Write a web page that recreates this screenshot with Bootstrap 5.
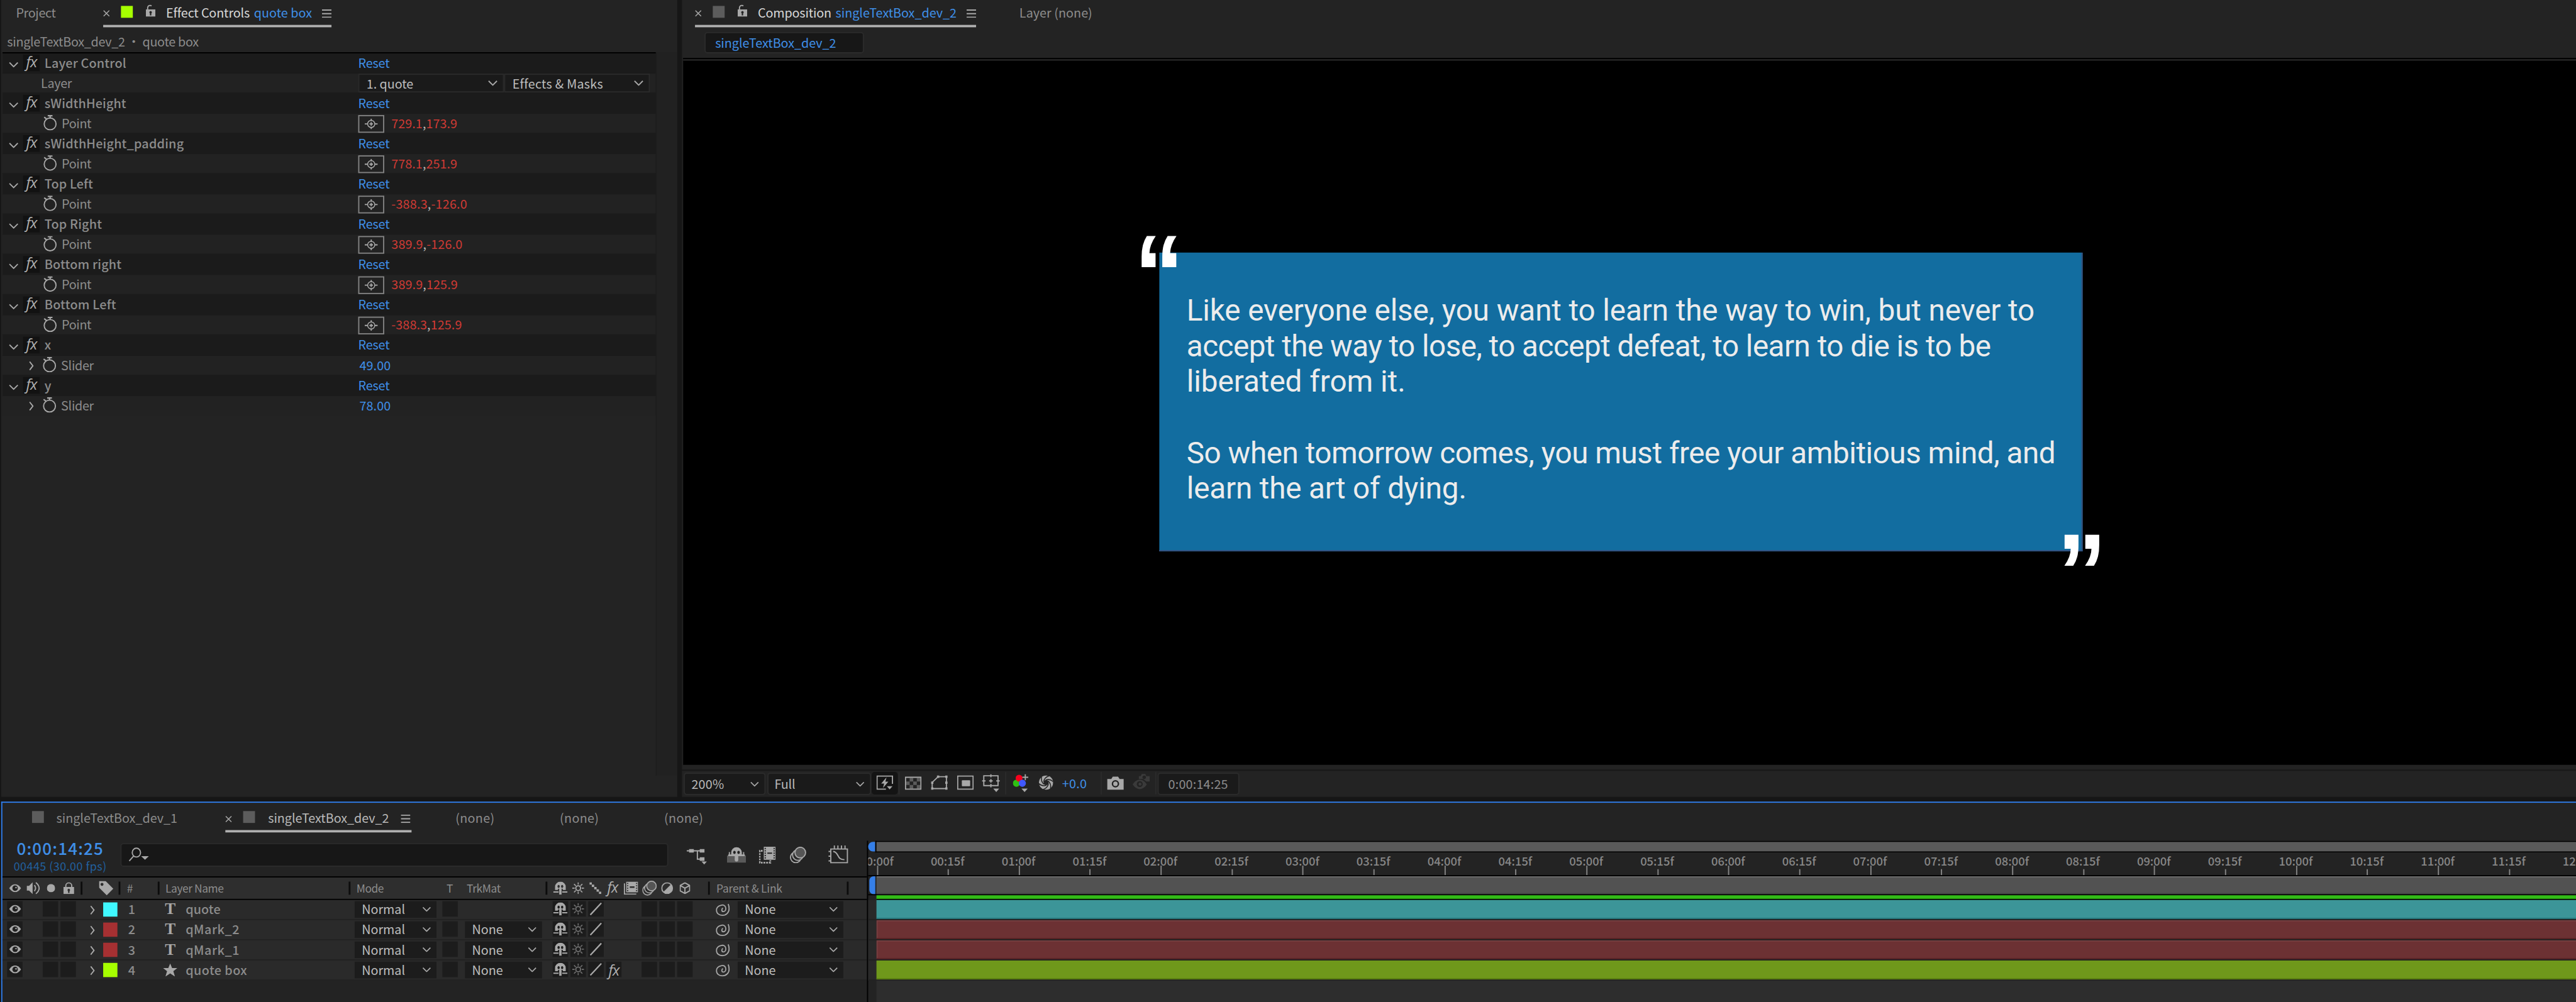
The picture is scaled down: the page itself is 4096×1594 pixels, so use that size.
<!DOCTYPE html>
<html lang="en">
<head>
<meta charset="utf-8">
<title>Composition editor</title>
<link rel="stylesheet" href="https://cdn.jsdelivr.net/npm/bootstrap@5.3.0/dist/css/bootstrap.min.css">
<style>
html,body{width:4096px;height:1594px;overflow:hidden;background:#161616}
body{font-family:"Noto Sans CJK SC","Noto Sans",sans-serif;font-size:21px;color:#8c8c8c;line-height:1}
.screen{width:4096px;height:1594px;overflow:hidden;contain:strict}
.app{width:4344px;height:1690px;overflow:hidden;transform:scale(.94291,.9432);transform-origin:0 0;background:#161616}
.app span,.app svg,.app i{flex:none;white-space:nowrap}
svg{display:block;fill:none;stroke:#a8a8a8;stroke-width:2}
.solid{fill:#a8a8a8;stroke:none}
.blue{color:#3f8fe8}.red{color:#cf3a34}.lit{color:#d8d8d8}.soft{color:#b9b9b9}
.top{height:1344px}
.pane{background:#232323}
.effects{width:1140px;margin-left:2px}
.viewer{margin-left:8px;width:3194px}
/* tabs */
.tabs{height:46px;line-height:42px}
.tab-on{height:46px;border-bottom:4px solid #b0b0b0}
.sq{width:20px;height:20px;background:#5c5c5c;margin-top:10px}
.lime{background:#a6ff00}
.fxi{font-family:"Open Sans","Noto Sans",sans-serif;font-style:italic;font-size:25px;letter-spacing:-1px;color:#b0b0b0}
.tab-off{margin-left:25px;width:67px}
.tab-fx{width:385px;margin-left:80px}
.tab-comp{width:474px;margin-left:22px}
.tab-on>svg:first-child{margin-top:17px}
.tab-on>.sq{margin-left:19px}
.tab-on>.sq+svg{margin:8px 18px 0 22px}
.tab-on>.blue{margin-left:7px}
.tab-on>svg:last-child{margin:16px 0 0 auto}
.tab-layer{margin-left:73px}
/* effect tree */
.crumb{height:42px;line-height:47px;padding-left:10px}
.tree{margin-left:2px;width:1102px}
.effhead{height:36px;line-height:34px;background:#1b1b1b;padding-left:11px}
.effhead:first-child{box-shadow:inset 0 2px #000}
.effhead>svg{margin-top:16px}
.effbody{height:32px;line-height:30px;background:#222}
.tile{width:28px;height:28px;background:#121212;margin-left:8px;line-height:24px;text-align:center}
.tile .fxi{line-height:22px;display:block}
.nm{width:529px;margin-left:8px;font-weight:500}
.lead-in{width:600px}
.lbl-layer{margin-left:65px}
.turn{margin:9px 15px 0 45px}
.watch{margin:2px 8px 0 0}
.watch.alone{margin-left:69px}
.target{width:44px;height:30px;border:2px solid #828282;margin:2px 12px 0 0}
.pick{height:32px;line-height:28px;background:#1a1a1a;border:2px solid #2b2b2b;color:#bdbdbd}
.pick-a{width:246px;padding:0 9px 0 12px}
.strip{width:36px;height:1220px;background:#212121;border-left:1px solid #1c1c1c}
/* viewer */
.flow-btn{width:269px;height:36px;margin:8px 0 8px 38px;background:#171717;border:2px solid #2b2b2b;border-radius:5px;padding-left:16px;line-height:32px}
.stage{margin-left:2px;height:1192px;background:#000;border-top:2px solid #000;box-shadow:inset 0 2px #333;padding:326px 0 0 803px}
.quote-box{width:1557px;height:504px;background:#126da0;padding:68px 0 0 46px;box-shadow:inset -2px -2px #38507f}
.quote-box p{font-family:Roboto,"Noto Sans",sans-serif;font-size:50.5px;line-height:60px;color:#ececec;margin:0 0 60px}
.qm{position:absolute;font-family:"Liberation Sans",sans-serif;font-weight:700;font-size:185px;line-height:185px;color:#fff;transform:scaleX(.9);transform-origin:0 0}
.qm-a{left:-42px;top:-56px}.qm-b{left:1514px;top:447px}
.bar{height:46px;margin-top:8px;border-top:2px solid #181818}
.sel{height:38px;margin-top:3px;background:#1a1a1a;border:2px solid #2b2b2b;border-radius:5px;line-height:33px;color:#b9b9b9}
.sep{width:2px;height:38px;background:#2b2b2b;margin-top:2px}
.s138{width:138px;padding:0 9px 0 11px}.s175{width:175px;padding:0 9px 0 10px}
.fast{width:44px;height:38px;background:#141414;border-radius:5px;margin-top:2px;padding-left:8px}
.fast svg{margin-top:-2px}
.expo{line-height:40px}
.timebox{padding-left:16px;color:#8c8c8c;line-height:34px}
.x1{margin-left:1px}.x2{margin-left:2px}.x3{margin-left:3px}.x9{margin-left:9px}.x11{margin-left:11px}.x14{margin-left:14px}.x15{margin-left:15px}.x16{margin-left:16px}.x18{margin-left:18px}.x23{margin-left:23px}
/* timeline */
.timeline{margin:8px 0 0 2px;width:4342px;height:338px;border:2px solid #2f7be8;border-right:0;border-bottom:0;background:#232323;overflow:hidden}
.tltop{height:124px;width:1458px}
.tltabs{height:50px;line-height:50px}
.tltabs .sq{margin-top:14px}
.tltabs .tab-on{height:50px}
.sq1{margin-left:50px}
.tn1{margin-left:21px}
.tab-tl{width:314px;margin-left:81px}
.tab-tl>span{margin-left:22px}
.tltabs .tab-tl>svg:first-child{margin-top:22px}
.tltabs .tab-tl>svg:last-child{margin-top:20px;margin-right:2px}
.n1{margin-left:74px}.n2{margin-left:110px}
.tools{margin-top:18px}
.clock{width:199px;margin-top:-6px}
.tc{font-size:27.5px;font-weight:500;color:#3f8fe8;line-height:28px;height:30px;padding-left:24px}
.fps{font-size:19px;color:#22609f;line-height:20px;padding:4px 0 0 19px}
.search{width:924px;height:40px;background:#171717;border:2px solid #2a2a2a;border-radius:5px;padding-left:12px}
.tool-a{margin-left:31px}.tool-b{margin-left:34px}.tool-c{margin-left:22px}.tool-d{margin-left:24px;margin-top:6px}.tool-e{margin-left:37px}
.tlhead{display:grid;grid-template-columns:135px 64px 66px 322px 332px 274px 234px 31px;width:1458px;height:40px;background:#2e2e2e;border-top:2px solid #000;border-bottom:2px solid #000;font-size:18.5px;line-height:22px;align-items:center}
.tlhead>div{height:22px;border-right:3px solid #0c0c0c;display:flex;align-items:center}
.tlhead>div:last-child{border:0}
.tlhead span{margin-top:-3px}
.h1c{padding-left:11px}.h1c svg+svg{margin-left:9px}.h1c svg:nth-child(3){margin-left:10px}.h1c svg:nth-child(4){margin-left:14px}
.h2c{padding-left:28px}.h3c{padding-left:11px}.h4c{padding-left:10px}.h5c{padding-left:10px}.h5c span:nth-child(2){margin-left:106px;width:9px}.h5c span:nth-child(3){margin-left:25px}
.h6c{padding-left:10px}.h6c>*{flex:none}
.h6c>:nth-child(2){margin-left:8px}.h6c>:nth-child(3){margin-left:9px}.h6c .fxi{margin:-4px 0 0 10px;width:22px}.h6c>:nth-child(5){margin-left:6px}.h6c>:nth-child(6){margin-left:7px}.h6c>:nth-child(7){margin-left:7px}.h6c>:nth-child(8){margin-left:11px}
.h7c{padding-left:11px}
.lrow{display:grid;grid-template-columns:8px 30px 30px 30px 30px 42px 39px 62px 38px 285px 148px 38px 148px repeat(8,30px) 35px 37px 218px;width:1458px;height:34px;background:#2a2a2a;border-bottom:2px solid #222;line-height:30px}
.lrow>div{display:flex;align-items:flex-start}
.lrow b{font-weight:500}
.cell{background:#1c1c1c;width:26px;height:26px;margin-top:2px;display:flex;align-items:center;justify-content:center}
.cell .fxi{line-height:22px}
.twirl{margin:9px 0 0 20px}
.rnum{padding-left:3px}
.swatch{width:24px;height:24px;margin-top:4px}
.starry{margin-top:5px}
.spiral{margin-top:5px}
.kind{font-family:"Liberation Serif",serif;font-weight:700;font-size:27px;color:#a8a8a8;margin-left:3px;line-height:30px}
.dd{display:flex;justify-content:space-between;align-items:flex-start;background:#1c1c1c;color:#bdbdbd;height:28px;line-height:26px;margin-top:2px;padding:0 9px 0 12px}
.dd svg{margin-top:9px}
.d138{width:138px}.d130{width:130px}.d178{width:178px}
.dim svg{opacity:.6}
.c-cyan{background:#40f8ff}.c-red{background:#a63032}.c-lime{background:#a6ff00}
.lanes{width:2882px;border-left:2px solid #000;margin-top:64px}
.nav-track{height:20px;background:#5a5a5a;border:2px solid #000;border-right:0;width:2868px}
.grab{width:12px;height:16px;background:#357fe8;border-radius:9px 0 0 9px;margin-top:2px}
.ruler{height:38px;font-size:19.5px;line-height:27px;overflow:hidden;font-weight:500;color:#868686}
.tick{width:119.66px;text-align:center;position:relative}
.tick::after{content:"";position:absolute;left:60px;bottom:0;width:2px;height:10px;background:#868686}
.tick:nth-child(odd)::after{height:16px}
.ruler .d-flex{margin-left:-45.5px;height:38px}
.work{height:34px;border-top:2px solid #000;border-bottom:2px solid #000}
.wbar{margin-left:2px;width:2866px;background:#525252;box-shadow:inset 0 2px #696969,inset 0 -2px #484848}
.work .grab{margin:0 0 0 2px;width:10px;height:30px;border-radius:7px 0 0 7px}
.cache{height:8px;margin-left:14px;background:#33bb18;border-bottom:2px solid #000}
.lane{height:34px;border-bottom:2px solid #222;background:#292929;padding-left:14px}
.lane>div{height:32px}
.l-cyan{background:#3c9598;box-shadow:inset 0 -2px #28777b}
.l-red{background:#6c3133;box-shadow:inset 0 -2px #552224,inset 2px 2px #774042}
.l-lime{background:#6f981b;box-shadow:inset 0 -2px #587b10}
.void{height:36px;margin-left:14px;background:#2d2d2d}
</style>
<script src="https://cdn.jsdelivr.net/npm/bootstrap@5.3.0/dist/js/bootstrap.bundle.min.js"></script>
</head>
<body>
<svg width="0" height="0" class="position-absolute">
<symbol id="down" viewBox="0 0 16 10"><path d="M1 1.500l7 7 7-7"/></symbol>
<symbol id="next" viewBox="0 0 8 16"><path d="M1 1l5.500 7-5.500 7"/></symbol>
<symbol id="burger" viewBox="0 0 16 14"><path d="M0 1h16M0 7h16M0 13h16"/></symbol>
<symbol id="close" viewBox="0 0 11 11"><path d="M.7.7l9.600 9.600M10.300.7l-9.600 9.600" stroke-width="1.600"/></symbol>
<symbol id="unlock" viewBox="0 0 16 20"><path d="M3 9V5a4 4 0 0 1 6.500-3"/><path class="solid" fill-rule="evenodd" d="M0 8h16v12H0zM8 10.500a2.200 2.200 0 0 0-1.200 4V18h2.400v-3.500a2.200 2.200 0 0 0-1.200-4z"/></symbol>
<symbol id="lock" viewBox="0 0 18 20"><path d="M4 9V6a5 5 0 0 1 10 0v3"/><path class="solid" fill-rule="evenodd" d="M0 8h18v12H0zM9 11a2.200 2.200 0 0 0-1.200 4v3h2.400v-3A2.200 2.200 0 0 0 9 11z"/></symbol>
<symbol id="watch" viewBox="0 0 23 26"><circle cx="11.500" cy="15" r="10"/><path d="M7.500 1.200h8M11.500 1v4M1.500 3.500l4 3" stroke-width="2.300"/></symbol>
<symbol id="aim" viewBox="0 0 22 18"><circle cx="11" cy="9" r="6" stroke-width="1.600"/><path d="M0 9h5M17 9h5M11 0v4M11 14v4M8 9h6M11 6v6"/></symbol>
<symbol id="eye" viewBox="0 0 20 14"><path class="solid" d="M0 7Q10-6.500 20 7 10 20.500 0 7z"/><circle cx="10" cy="7" r="4.600" fill="#222" stroke="none"/><circle cx="11.500" cy="6" r="1.300" class="solid"/></symbol>
<symbol id="ghost" viewBox="0 0 24 22"><path class="solid" fill-rule="evenodd" d="M3 14V8.500a9 8.500 0 0 1 18 0V14h-4.500l-1-2h-7l-1 2zM9 5.500a1.900 2.500 0 1 0 .01 0zM15 5.500a1.900 2.500 0 1 0 .01 0z"/><path class="solid" d="M10 11h4v11h-4z"/><path d="M0 17.500h9M15 17.500h9"/></symbol>
<symbol id="sun" viewBox="0 0 20 20"><circle cx="10" cy="10" r="4"/><path d="M10 0v4M10 16v4M0 10h4M16 10h4M3 3l3 3M14 14l3 3M17 3l-3 3M6 14l-3 3" stroke-width="1.700"/></symbol>
<symbol id="slash" viewBox="0 0 22 22"><path d="M1.500 21L20 1" stroke-width="2.400"/></symbol>
<symbol id="stair" viewBox="0 0 20 20"><path class="solid" d="M0 0h4v4H0zM4 4h4v4H4zM8 8h4v4H8zM12 12h4v4h-4zM16 16h4v4h-4z"/></symbol>
<symbol id="film" viewBox="0 0 24 22"><path d="M1 3v18h20"/><path class="solid" fill-rule="evenodd" d="M4 0h20v18H4zM5.500 2v2h2V2zM5.500 6v2h2V6zM5.500 10v2h2v-2zM5.500 14v2h2v-2zM20.500 2v2h2V2zM20.500 6v2h2V6zM20.500 10v2h2v-2zM20.500 14v2h2v-2zM10 8v2.500h8V8z"/></symbol>
<symbol id="blurs" viewBox="0 0 28 28"><circle cx="10" cy="18" r="9"/><circle cx="13.500" cy="14" r="9" fill="#2a2a2a"/><circle cx="17.500" cy="10" r="9" fill="#555"/></symbol>
<symbol id="half" viewBox="0 0 20 20"><circle cx="10" cy="10" r="9"/><path class="solid" d="M16.400 3.600A9 9 0 0 1 3.600 16.400z"/></symbol>
<symbol id="cube" viewBox="0 0 18 20"><path d="M9 1l8 4.500v9L9 19l-8-4.500v-9zM1 5.500l8 4.500 8-4.500M9 10v9"/></symbol>
<symbol id="whirl" viewBox="0 0 24 22"><path d="M12 8.500c-2.500 2-2.500 6 1 6 3.200 0 4.500-3.500 3.800-6.500C16 4 12.500 2.500 9 3.800 4.500 5 1.200 8 1.200 12 1.200 17.500 5.500 20.800 11 20.800c7 0 11.500-5 11.500-11 0-3-.5-5.500-1.500-8" stroke-width="1.900"/></symbol>
<symbol id="star" viewBox="0 0 24 22"><path class="solid" d="M12 0l3.200 7.800H24l-6.700 5.300L20 22l-8-5.300L4 22l2.700-8.900L0 7.800h8.800z"/></symbol>
</svg>

<div class="screen">
<div class="app">
  <div class="top d-flex">
    <section class="effects pane">
      <div class="tabs d-flex">
        <span data-w="67" class="tab-off">Project</span>
        <div class="tab-on tab-fx d-flex">
          <svg width="11" height="11"><use href="#close"/></svg>
          <div class="sq lime"></div>
          <svg width="16" height="20"><use href="#unlock"/></svg>
          <span class="lit" data-w="141">Effect Controls</span><span class="blue" data-w="98">quote box</span>
          <svg width="16" height="14"><use href="#burger"/></svg>
        </div>
      </div>
      <div class="crumb"><span data-w="323">singleTextBox_dev_2 • quote box</span></div>
      <div class="d-flex">
        <div class="tree" id="tree"></div>
        <div class="strip"></div>
      </div>
    </section>

    <section class="viewer pane">
      <div class="tabs d-flex">
        <div class="tab-on tab-comp d-flex">
          <svg width="11" height="11"><use href="#close"/></svg>
          <div class="sq"></div>
          <svg width="16" height="20"><use href="#unlock"/></svg>
          <span class="lit" data-w="124">Composition</span><span class="blue" data-w="204">singleTextBox_dev_2</span>
          <svg width="16" height="14"><use href="#burger"/></svg>
        </div>
        <span class="tab-layer" data-w="123">Layer (none)</span>
      </div>
      <div class="flow-btn blue"><span data-w="204">singleTextBox_dev_2</span></div>
      <div class="stage">
        <div class="quote-box position-relative">
          <p><span data-w="1430">Like everyone else, you want to learn the way to win, but never to</span><br><span data-w="1356">accept the way to lose, to accept defeat, to learn to die is to be</span><br><span data-w="369">liberated from it.</span></p>
          <p><span data-w="1465">So when tomorrow comes, you must free your ambitious mind, and</span><br><span data-w="472">learn the art of dying.</span></p>
          <div class="qm qm-a">“</div><div class="qm qm-b">”</div>
        </div>
      </div>
      <div class="bar d-flex">
        <div class="sel s138 x3 d-flex justify-content-between align-items-center"><span data-w="55">200%</span><svg width="15" height="9"><use href="#down"/></svg></div>
        <div class="sel s175 x3 d-flex justify-content-between align-items-center"><span data-w="35">Full</span><svg width="15" height="9"><use href="#down"/></svg></div>
        <div class="fast x1"><svg width="28" height="44"><path d="M16 31H1V9h26v13"/><path class="solid" d="M17 11L8 21.500h5L11 29l9-10.500h-5zM17.500 26H27l-4.700 5.500z"/></svg></div>
        <div class="sep x1"></div>
        <svg class="x9" width="28" height="44"><path stroke="none" fill="#5c5c5c" d="M8 12h6v6H8zM20 12h6v6h-6zM2 18h6v6H2zM14 18h6v6h-6zM8 24h6v6H8zM20 24h6v6h-6z"/><path d="M1 11h26v20H1z"/></svg>
        <svg class="x16" width="28" height="44"><path d="M2 30V19.500L12 10h14v20z"/><path class="solid" d="M0 28h4v4H0zM24 28h4v4h-4zM24 8h4v4h-4zM10 8h4v4h-4zM0 18h4v4H0zM24 18h4v4h-4z"/></svg>
        <svg class="x16" width="28" height="44"><path d="M1 9h26v22H1z"/><rect class="solid" x="8" y="16" width="14" height="10" rx="1"/></svg>
        <svg class="x14" width="30" height="44"><path d="M3 8.500h24V25H3zM15 6v5M15 22v6M0 17h6M24 17h6M12 17h6M15 14v6"/><path class="solid" d="M19 30h10l-5 6z"/></svg>
        <div class="sep x9"></div>
        <svg class="x11" width="26" height="44"><g stroke="none"><circle cx="6" cy="21" r="6" fill="#2fbf12"/><circle cx="10.500" cy="12.500" r="5.800" fill="#f5001c"/><circle cx="16" cy="21" r="6" fill="#4058ff"/></g><path d="M21 6v10M16 11h10"/><path class="solid" d="M14.500 30h10.500l-5.200 6z"/></svg>
        <svg class="x18" width="24" height="44"><circle class="solid" cx="12" cy="20" r="12"/><circle cx="12" cy="20" r="4.200" fill="#232323" stroke="none"/><g stroke="#232323" stroke-width="1.600"><path id="bl" d="M8 18.500Q9 11 17 8.500"/><use href="#bl" transform="rotate(60 12 20)"/><use href="#bl" transform="rotate(120 12 20)"/><use href="#bl" transform="rotate(180 12 20)"/><use href="#bl" transform="rotate(240 12 20)"/><use href="#bl" transform="rotate(300 12 20)"/></g></svg>
        <span class="blue expo x15" data-w="42">+0.0</span>
        <div class="sep x23"></div>
        <svg class="x9" width="28" height="44"><path class="solid" d="M0 14h7l2.500-4h9l2.500 4h7v18H0z"/><circle cx="14" cy="22" r="5" stroke="#232323" fill="#a8a8a8" stroke-width="2.500"/></svg>
        <svg class="x15" width="29" height="44"><g fill="#3a3a3a" stroke="none" fill-rule="evenodd"><path d="M0 23q5-8 12-8t12 8q-5 8-12 8T0 23zM12 17.500a5 5 0 1 0 .01 0zM10.500 9h3l2-3.500h6L23 9h6v9h-6l-5-4h-7.500zM19.500 8a3 3 0 1 0 .01 0z"/><circle cx="12.500" cy="22.500" r="2.500"/></g></svg>
        <div class="sep x9"></div>
        <div class="sel s138 x2 timebox"><span data-w="101">0:00:14:25</span></div>
      </div>
    </section>
  </div>

  <section class="timeline d-flex">
    <div>
      <div class="tltop">
        <div class="tltabs d-flex">
          <div class="sq sq1"></div><span class="tn1" data-w="204">singleTextBox_dev_1</span>
          <div class="tab-on tab-tl d-flex">
            <svg width="11" height="11"><use href="#close"/></svg>
            <div class="sq"></div><span class="soft" data-w="204">singleTextBox_dev_2</span>
            <svg width="16" height="14"><use href="#burger"/></svg>
          </div>
          <span class="n1" data-w="66">(none)</span><span class="n2" data-w="66">(none)</span><span class="n2" data-w="66">(none)</span>
        </div>
        <div class="d-flex tools">
          <div class="clock"><div class="tc"><span data-w="147">0:00:14:25</span></div><div class="fps"><span data-w="157">00445 (30.00 fps)</span></div></div>
          <div class="search"><svg width="34" height="36"><ellipse cx="13" cy="14" rx="7" ry="7.500"/><path d="M8.500 19.500L1 28"/><path class="solid" d="M21 20h13l-6.500 6z"/></svg></div>
          <svg class="tool-a" width="34" height="40"><path d="M0 13h26M18 13v14h8"/><path class="solid" d="M4 10h8v6H4zM22 10h8v6h-8zM22 24h8v6h-8zM25 31h9l-4.500 5z"/></svg>
          <svg class="tool-b" width="32" height="40"><path stroke="none" fill="#5a5a5a" d="M0 21h32v12H0z"/><path class="solid" fill-rule="evenodd" d="M7 19v-3a9 9 0 0 1 18 0v3h2v-4h2v4h1v3H19v6a3 3 0 0 1-6 0v-6H2v-3h1v-4h2v4zM12.500 13a2.200 2.700 0 1 0 .01 0zM19.500 13a2.200 2.700 0 1 0 .01 0z"/></svg>
          <svg class="tool-c" width="28" height="40"><path d="M6 13H1v20h18v-4" stroke-width="3" stroke-dasharray="3 1.500"/><path class="solid" fill-rule="evenodd" d="M8 6h20v22H8zM9.500 8v2h2V8zM9.500 12v2h2v-2zM9.500 16v2h2v-2zM9.500 20v2h2v-2zM9.500 24v2h2v-2zM24.500 8v2h2V8zM24.500 12v2h2v-2zM24.500 16v2h2v-2zM24.500 20v2h2v-2zM24.500 24v2h2v-2zM14 16v2h8v-2z"/></svg>
          <svg class="tool-d" width="28" height="28"><use href="#blurs"/></svg>
          <svg class="tool-e" width="34" height="40"><path d="M4 10h28v23H4zM10 4v6M16 4v6M22 4v6M28 4v6M0 14h4M0 22h4M0 30h4"/><path d="M8 14c4 0 6 3 8 7s4 7 11 7"/></svg>
        </div>
      </div>
      <div class="tlhead">
        <div class="h1c"><svg width="21" height="14"><use href="#eye"/></svg><svg width="24" height="22"><path class="solid" d="M0 7h4l6-6v20l-6-6H0z"/><path d="M13 6q4 5 0 10M15.500 1.500q11 9.500 0 19"/></svg><svg width="14" height="14"><circle class="solid" cx="7" cy="7" r="7"/></svg><svg width="18" height="20"><use href="#lock"/></svg></div>
        <div class="h2c"><svg width="24" height="24"><path class="solid" fill-rule="evenodd" d="M0 0h11l13 13-11 11L0 11zM5 3a2.500 2.500 0 1 0 .01 0z"/></svg></div>
        <div class="h3c"><span data-w="9">#</span></div>
        <div class="h4c"><span data-w="98">Layer Name</span></div>
        <div class="h5c"><span data-w="46">Mode</span><span>T</span><span data-w="57">TrkMat</span></div>
        <div class="h6c"><svg width="24" height="22"><use href="#ghost"/></svg><svg width="20" height="20"><use href="#sun"/></svg><svg width="20" height="20"><use href="#stair"/></svg><i class="fxi">fx</i><svg width="24" height="22"><use href="#film"/></svg><svg width="25" height="26"><use href="#blurs"/></svg><svg width="20" height="20"><use href="#half"/></svg><svg width="18" height="20"><use href="#cube"/></svg></div>
        <div class="h7c"><span data-w="111">Parent &amp; Link</span></div>
        <div></div>
      </div>
      <div id="layers"></div>
    </div>
    <div class="lanes">
      <div class="d-flex"><div class="grab"></div><div class="nav-track"></div></div>
      <div class="ruler"><div class="d-flex" id="ruler"></div></div>
      <div class="work d-flex"><div class="grab"></div><div class="wbar"></div></div>
      <div class="cache"></div>
      <div class="lane"><div class="l-cyan"></div></div>
      <div class="lane"><div class="l-red"></div></div>
      <div class="lane"><div class="l-red"></div></div>
      <div class="lane"><div class="l-lime"></div></div>
      <div class="void"></div>
    </div>
  </section>
</div>
</div>

<script>
// Effect tree: name, label width, kind of property, value, value width
const use=(id,w,h,c='')=>`<svg class="${c}" width="${w}" height="${h}"><use href="#${id}"/></svg>`;
const fx=[['Layer Control',138,'layer'],['sWidthHeight',138,'pt','729.1','173.9',111],['sWidthHeight_padding',235,'pt','778.1','251.9',111],
['Top Left',82,'pt','-388.3','-126.0',128],['Top Right',97,'pt','389.9','-126.0',120],['Bottom right',130,'pt','389.9','125.9',112],
['Bottom Left',121,'pt','-388.3','125.9',119],['x',10,'num','49.00'],['y',10,'num','78.00']];
document.getElementById('tree').innerHTML=fx.map(f=>{
  const head=`<div class="effhead d-flex">${use('down',16,10)}<div class="tile mt-1"><i class="fxi">fx</i></div><div class="nm"><span data-w="${f[1]}">${f[0]}</span></div><span class="blue" data-w="53">Reset</span></div>`;
  let lead,val;
  if(f[2]=='layer'){lead='<span class="lbl-layer" data-w="52">Layer</span>';
    val=`<div class="pick pick-a d-flex justify-content-between align-items-center"><span data-w="79">1. quote</span>${use('down',16,10)}</div><div class="pick pick-a d-flex justify-content-between align-items-center"><span data-w="153">Effects &amp; Masks</span>${use('down',16,10)}</div>`}
  else if(f[2]=='pt'){lead=use('watch',23,26,'watch alone')+'<span data-w="50">Point</span>';
    val=`<div class="target d-flex align-items-center justify-content-center">${use('aim',22,18)}</div><span class="red" data-w="${f[5]}">${f[3]}<span class="soft">,</span>${f[4]}</span>`}
  else{lead=use('next',8,16,'turn')+use('watch',23,26,'watch')+'<span data-w="55">Slider</span>';val=`<span class="blue x2" data-w="53">${f[3]}</span>`}
  return head+`<div class="effbody d-flex"><div class="lead-in d-flex">${lead}</div>${val}</div>`}).join('');

// Layer rows
const layers=[['c-cyan','quote',59,0],['c-red','qMark_2',91,1],['c-red','qMark_1',91,1],['c-lime','quote box',104,1]];
const none=c=>`<div class="dd ${c}"><span data-w="52">None</span>${use('down',15,9)}</div>`;
const cell=(s='')=>`<div><div class="cell">${s}</div></div>`;
document.getElementById('layers').innerHTML=layers.map((l,i)=>`<div class="lrow"><div></div>
${cell(use('eye',21,14))}<div></div>${cell()}${cell()}
<div>${use('next',8,16,'twirl')}</div><div><div class="swatch ${l[0]}"></div></div>
<div class="rnum"><b>${i+1}</b></div><div>${i<3?'<span class="kind">T</span>':use('star',24,22,'starry')}</div><div><b><span data-w="${l[2]}">${l[1]}</span></b></div>
<div><div class="dd d138"><span data-w="73">Normal</span>${use('down',15,9)}</div></div>${cell()}<div>${l[3]?none('d130'):''}</div>
${cell(use('ghost',24,22))}<div class="dim"><div class="cell">${use('sun',20,20)}</div></div>${cell(use('slash',22,22))}${i==3?cell('<i class="fxi">fx</i>'):'<div></div>'}<div></div>${cell()}${cell()}${cell()}
<div></div><div>${use('whirl',24,22,'spiral')}</div><div>${none('d178')}</div></div>`).join('');

// Ruler marks, one each fifteen frames
let marks='';
for(let i=0;i<25;i++)marks+=`<span class="tick"><span data-w="57">${String(i>>1).padStart(2,'0')}:${i%2?'15':'00'}f</span></span>`;
document.getElementById('ruler').innerHTML=marks;

document.fonts.ready.then(()=>document.querySelectorAll('[data-w]').forEach(e=>{
  e.style.display='inline-block';
  e.style.width='auto';
  const n=e.textContent.length, w=e.getBoundingClientRect().width/.94291;
  e.style.letterSpacing=((+e.dataset.w-w)/n).toFixed(3)+'px';
}));
</script>
</body>
</html>
